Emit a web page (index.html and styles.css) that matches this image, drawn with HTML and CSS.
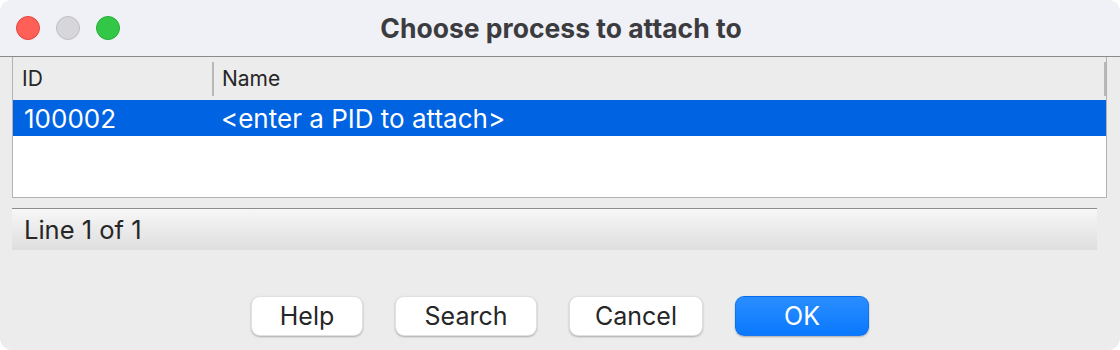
FILE: index.html
```html
<!DOCTYPE html>
<html>
<head>
<meta charset="utf-8">
<link rel="stylesheet" href="styles.css">
</head>
<body>
<div class="window">
  <div class="titlebar">
    <div class="lights">
      <span class="light red"></span>
      <span class="light gray"></span>
      <span class="light green"></span>
    </div>
    <div class="title">Choose process to attach to</div>
  </div>
  <div class="content">
    <div class="table">
      <div class="thead">
        <div class="th col-id">ID</div>
        <div class="sep"></div>
        <div class="th col-name">Name</div>
        <div class="sep sep-end"></div>
      </div>
      <div class="row selected">
        <div class="td col-id">100002</div>
        <div class="td col-name">&lt;enter a PID to attach&gt;</div>
      </div>
      <div class="empty"></div>
    </div>
    <div class="status">Line 1 of 1</div>
    <div class="buttons">
      <button class="btn btn-help">Help</button>
      <button class="btn btn-search">Search</button>
      <button class="btn btn-cancel">Cancel</button>
      <button class="btn btn-ok">OK</button>
    </div>
  </div>
</div>
</body>
</html>
```
FILE: styles.css
```css
* { box-sizing: border-box; }
html, body { margin: 0; padding: 0; background: #ffffff; }
body { font-family: Inter, "Noto Sans", "Liberation Sans", sans-serif; }

.window {
  width: 1120px;
  height: 350px;
  border-radius: 12px;
  overflow: hidden;
  background: #ececec;
  display: flex;
  flex-direction: column;
}

.titlebar {
  height: 57px;
  flex: none;
  background: #f0f1f6;
  border-bottom: 1px solid #8a8a8a;
  position: relative;
  display: flex;
  align-items: center;
  justify-content: center;
}

.lights {
  position: absolute;
  left: 16px;
  top: 16px;
  display: flex;
  gap: 16px;
}
.light {
  width: 24px;
  height: 24px;
  border-radius: 50%;
  display: block;
}
.light.red { background: #fe5f57; border: 1px solid #e2463f; }
.light.gray { background: #d6d6db; border: 1px solid #bfbfc4; }
.light.green { background: #33c748; border: 1px solid #26ad36; }

.title {
  font-size: 26.5px;
  font-weight: 700;
  color: #3c3c40;
  padding-left: 2px;
}

.content {
  flex: 1;
  padding: 0 13px 0 12px;
  display: flex;
  flex-direction: column;
}

.table {
  height: 141px;
  background: #ffffff;
  border: 1px solid #b3b3b3;
  border-top: none;
  display: flex;
  flex-direction: column;
}

.thead {
  height: 43px;
  flex: none;
  background: #ececec;
  display: flex;
  align-items: center;
}
.th {
  font-size: 21px;
  color: #262626;
}
.thead .col-id { width: 199px; padding-left: 9px; }
.thead .col-name { flex: 1; padding-left: 8px; }
.sep {
  width: 2px;
  height: 34px;
  background: #b8b8b8;
}

.row {
  height: 36px;
  flex: none;
  display: flex;
  align-items: center;
}
.row.selected { background: #0063e1; color: #ffffff; }
.td { font-size: 26px; }
.row .col-id { width: 199px; padding-left: 11px; }
.row .col-name { flex: 1; padding-left: 9px; }

.empty { flex: 1; }

.status {
  margin-top: 10px;
  margin-right: 10px;
  height: 42px;
  border-top: 1px solid #8c8c8c;
  background: linear-gradient(#f7f7f7, #dedede);
  font-size: 25.5px;
  color: #262626;
  padding-left: 12px;
  display: flex;
  align-items: center;
}

.buttons {
  margin-top: 46px;
  display: flex;
  justify-content: center;
  gap: 32px;
  padding-left: 1px;
}
.btn {
  height: 40px;
  border: 0.5px solid rgba(0, 0, 0, 0.12);
  border-radius: 9px;
  background: #ffffff;
  box-shadow: 0 1px 2px rgba(0, 0, 0, 0.28);
  font-family: Inter, "Noto Sans", "Liberation Sans", sans-serif;
  font-size: 25px;
  color: #262626;
  padding: 0;
}
.btn-help { width: 112px; }
.btn-search { width: 142px; }
.btn-cancel { width: 134px; }
.btn-ok {
  width: 134px;
  color: #ffffff;
  background: linear-gradient(#2a8dfe, #0a79ff);
  border-color: rgba(0, 90, 220, 0.4);
}
```
